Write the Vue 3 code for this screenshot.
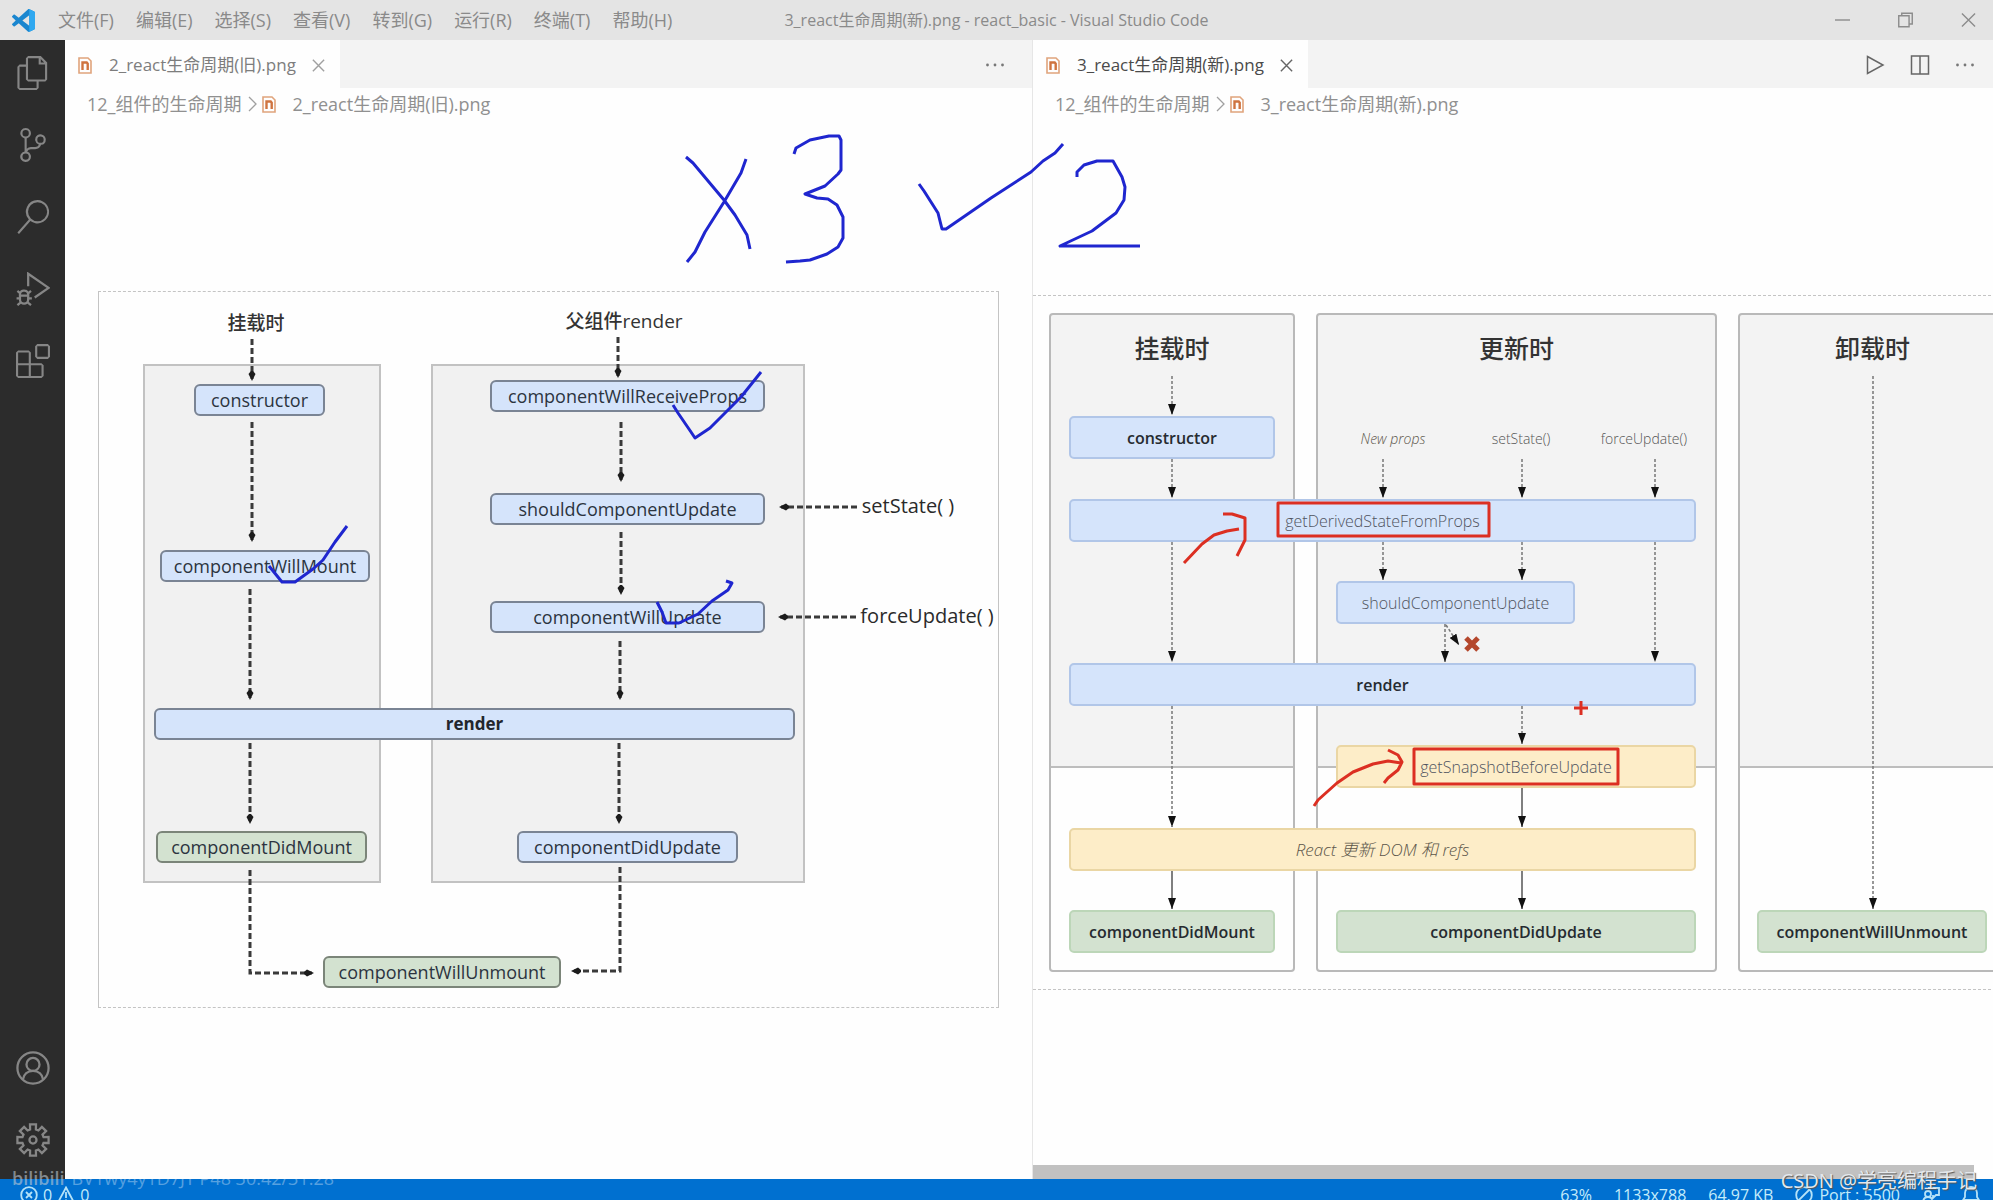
<script setup>
const menus = ['文件(F)', '编辑(E)', '选择(S)', '查看(V)', '转到(G)', '运行(R)', '终端(T)', '帮助(H)']

const activities = [
  { name: '资源管理器', d: 'M17.5 0h-9L7 1.5V6H2.5L1 7.5v15.07L2.5 24h12.07L16 22.57V18h4.7l1.3-1.43V4.5L17.5 0zm0 2.12l2.38 2.38H17.5V2.12zm-3 20.38h-12v-15H7v9.07L8.5 18h6v4.5zm6-6h-12v-15H16V6h4.5v10.5z' },
  { name: '源代码管理', d: 'M21.007 8.222A3.738 3.738 0 0 0 15.045 5.2a3.737 3.737 0 0 0 1.156 6.583 2.988 2.988 0 0 1-2.668 1.67h-2.99a4.456 4.456 0 0 0-2.989 1.165V7.4a3.737 3.737 0 1 0-1.494 0v9.117a3.776 3.776 0 1 0 1.816.099 2.99 2.99 0 0 1 2.668-1.667h2.99a4.484 4.484 0 0 0 4.223-3.039 3.736 3.736 0 0 0 3.25-3.687zM4.565 3.738a2.242 2.242 0 1 1 4.484 0 2.242 2.242 0 0 1-4.484 0zm4.484 16.441a2.242 2.242 0 1 1-4.484 0 2.242 2.242 0 0 1 4.484 0zm8.221-9.715a2.242 2.242 0 1 1 0-4.485 2.242 2.242 0 0 1 0 4.485z' },
  { name: '搜索', d: 'M15.25 0a8.25 8.25 0 0 0-6.18 13.72L1 22.88l1.12 1.12 8.05-9.12A8.251 8.251 0 1 0 15.25.01V0zm0 15a6.75 6.75 0 1 1 0-13.5 6.75 6.75 0 0 1 0 13.5z' },
  { name: '运行和调试', stroke: true, d: 'M8.6 10V1.2L23 11.2 13.2 18M6 13.2a2.6 2.6 0 0 1 2.6 2.6v3.6a2.9 2.9 0 0 1-5.8 0v-3.6A2.6 2.6 0 0 1 6 13.2zM2.8 16.6h5.8M.4 18.6h2.4M8.8 18.6h2.4M1 13.4l2.2 1.8M10.6 13.4l-2.2 1.8M1 23.4l2.2-1.8M10.6 23.4l-2.2-1.8' },
  { name: '扩展', d: 'M13.5 1.5L15 0h7.5L24 1.5V9l-1.5 1.5H15L13.5 9V1.5zm1.5 0V9h7.5V1.5H15zM0 15V6l1.5-1.5H9L10.5 6v7.5H18l1.5 1.5v7.5L18 24H1.5L0 22.5V15zm9-1.5V6H1.5v7.5H9zM9 15H1.5v7.5H9V15zm1.5 7.5H18V15h-7.5v7.5z' },
]

// Eight-tooth gear outline around (12, 12)
const gearPath = (() => {
  const pts = []
  for (let i = 0; i < 8; i++) {
    const a = (i * Math.PI) / 4
    const steps = [[-0.27, 7.7], [-0.19, 11.2], [0.19, 11.2], [0.27, 7.7]]
    for (const [da, r] of steps) {
      pts.push(`${(12 + r * Math.sin(a + da)).toFixed(2)} ${(12 - r * Math.cos(a + da)).toFixed(2)}`)
    }
  }
  return `M${pts.join('L')}Z`
})()

// Nodes: x, y, w, h in canvas pixels
const oldNodes = [
  { t: 'constructor', c: 'blue', x: 96, y: 93, w: 131 },
  { t: 'componentWillMount', c: 'blue', x: 62, y: 259, w: 210 },
  { t: 'componentWillReceiveProps', c: 'blue', x: 392, y: 89, w: 275 },
  { t: 'shouldComponentUpdate', c: 'blue', x: 392, y: 202, w: 275 },
  { t: 'componentWillUpdate', c: 'blue', x: 392, y: 310, w: 275 },
  { t: 'render', c: 'blue strong', x: 56, y: 417, w: 641 },
  { t: 'componentDidMount', c: 'green', x: 58, y: 540, w: 211 },
  { t: 'componentDidUpdate', c: 'blue', x: 419, y: 540, w: 221 },
  { t: 'componentWillUnmount', c: 'green', x: 225, y: 665, w: 238 },
]
const oldPanels = [
  { x: 45, y: 73, w: 238, h: 519 },
  { x: 333, y: 73, w: 374, h: 519 },
]
const oldLabels = [
  { t: '挂载时', x: 158, y: 32, c: 'heading' },
  { t: '父组件render', x: 526, y: 30, c: 'heading' },
  { t: 'setState( )', x: 810, y: 215, c: 'call' },
  { t: 'forceUpdate( )', x: 829, y: 325, c: 'call' },
]
const oldArrows = [
  'M154 48V88', 'M154 131V249', 'M152 298V407', 'M152 452V531', 'M152 579V682H214',
  'M520 46V85', 'M523 131V189', 'M523 241V302', 'M522 350V407', 'M521 452V531', 'M522 576V680H475',
  'M759 216H683', 'M758 326H682',
]
const oldTicks = [
  'M171 275L184 291H197L215 278L225 269L237 251L249 235',
  'M575 114L580 122L593 141L597 147L612 137L621 128L643 106L663 81',
  'M559 311L564 321L568 332H581L600 323L614 310L630 299L634 292L628 290',
]

const newPanels = [
  { t: '挂载时', x: 16, w: 246 },
  { t: '更新时', x: 283, w: 401 },
  { t: '卸载时', x: 705, w: 269 },
]
const newNodes = [
  { t: 'constructor', c: 'sky strong', x: 36, y: 121, w: 206 },
  { t: 'getDerivedStateFromProps', c: 'sky light', x: 36, y: 204, w: 627 },
  { t: 'shouldComponentUpdate', c: 'sky light', x: 303, y: 286, w: 239 },
  { t: 'render', c: 'sky strong', x: 36, y: 368, w: 627 },
  { t: 'getSnapshotBeforeUpdate', c: 'sand light', x: 303, y: 450, w: 360 },
  { t: 'React 更新 DOM 和 refs', c: 'sand slanted', x: 36, y: 533, w: 627 },
  { t: 'componentDidMount', c: 'mint strong', x: 36, y: 615, w: 206 },
  { t: 'componentDidUpdate', c: 'mint strong', x: 303, y: 615, w: 360 },
  { t: 'componentWillUnmount', c: 'mint strong', x: 724, y: 615, w: 230 },
]
const newLabels = [
  { t: 'New props', x: 360, y: 144, c: 'source slanted' },
  { t: 'setState()', x: 488, y: 144, c: 'source' },
  { t: 'forceUpdate()', x: 611, y: 144, c: 'source' },
]
const dotted = [
  [139, 81, 120], [139, 164, 203], [139, 247, 367], [139, 411, 532],
  [350, 164, 203], [350, 247, 285],
  [489, 164, 203], [489, 247, 285], [489, 411, 449],
  [622, 164, 203], [622, 247, 367], [412, 329, 367], [840, 81, 614],
]
const solid = [[139, 576, 614], [489, 493, 532], [489, 576, 614]]

const panes = [
  { id: 'old', file: '2_react生命周期(旧).png', active: false },
  { id: 'new', file: '3_react生命周期(新).png', active: true },
]
const box = (n, h) => ({ left: n.x + 'px', top: n.y + 'px', width: n.w + 'px', height: h + 'px' })
const at = (n) => ({ left: n.x + 'px', top: n.y + 'px' })
</script>

<template>
  <div class="window">
    <header class="titlebar">
      <div class="menubar">
        <svg class="logo" viewBox="0 0 100 100" aria-hidden="true">
          <path fill="#1a86cf" fill-rule="evenodd" d="M96.5 10.7 75.9.8c-2.4-1.1-5.2-.7-7.1 1.2L29.4 38 12.2 25c-1.6-1.2-3.8-1.1-5.3.2l-5.5 5c-1.8 1.7-1.8 4.5 0 6.2L16.2 50 1.4 63.6c-1.8 1.7-1.8 4.5 0 6.2l5.5 5c1.5 1.4 3.7 1.5 5.3.2L29.4 62l39.4 36c1.9 1.9 4.7 2.3 7.1 1.2l20.6-9.9c2.2-1 3.5-3.2 3.5-5.6V16.3c0-2.4-1.4-4.6-3.5-5.6zM75 72.7 45.1 50 75 27.3z" />
          <path fill="#2fa8f0" d="M75.9.8 96.5 10.7c2.1 1 3.5 3.2 3.5 5.6v67.4c0 2.4-1.3 4.6-3.5 5.6l-20.6 9.9c-1.5.7-3 .6-4.4 0 2-.6 3.5-2 3.5-4.4V5.2c0-2.2-1.5-3.8-3.5-4.4 1.4-.6 2.9-.7 4.4 0z" />
        </svg>
        <nav class="menus">
          <button v-for="m in menus" :key="m" type="button">{{ m }}</button>
        </nav>
      </div>
      <div class="title">3_react生命周期(新).png - react_basic - Visual Studio Code</div>
      <div class="controls">
        <button type="button" aria-label="最小化"><svg viewBox="0 0 16 16"><path d="M0 8h16" /></svg></button>
        <button type="button" aria-label="还原"><svg viewBox="0 0 16 16"><path d="M.8 3.5h11v11.7h-11zM4 3.5V.8h11.2v11.5H12" /></svg></button>
        <button type="button" aria-label="关闭"><svg viewBox="0 0 16 16"><path d="M1 1l14 14M15 1 1 15" /></svg></button>
      </div>
    </header>

    <div class="workbench">
      <aside class="activity">
        <div class="group">
          <button v-for="a in activities" :key="a.name" type="button" :aria-label="a.name">
            <svg viewBox="0 0 24 24" :class="{ stroked: a.stroke }"><path :d="a.d" fill-rule="evenodd" /></svg>
          </button>
        </div>
        <div class="group">
          <button type="button" aria-label="帐户">
            <svg class="stroked" viewBox="0 0 24 24"><circle cx="12" cy="12" r="11" /><circle cx="12" cy="9.5" r="4.6" /><path d="M4.9 20c.6-3.6 3.3-6 7.1-6s6.5 2.4 7.1 6" /></svg>
          </button>
          <button type="button" aria-label="管理">
            <svg class="stroked" viewBox="0 0 24 24"><path :d="gearPath" /><circle cx="12" cy="12" r="2.5" /></svg>
          </button>
        </div>
      </aside>

      <main class="editors">
        <section v-for="p in panes" :key="p.id" class="pane" :class="p.id">
          <div class="tabs">
            <div class="tab" :class="{ active: p.active }">
              <svg class="file" viewBox="0 0 14 17"><path class="page" d="M1 1h9l3 3v12H1z" /><path class="mark" d="M4.5 13V5.5h4.2l1 1.2V13" /></svg>
              <span>{{ p.file }}</span>
              <button type="button" aria-label="关闭标签"><svg viewBox="0 0 12 12"><path d="M.8.8l10.4 10.4M11.2.8.8 11.2" /></svg></button>
            </div>
            <div class="actions">
              <template v-if="p.active">
                <button type="button" aria-label="运行"><svg viewBox="0 0 20 20"><path d="M2.5 1.5 18 10 2.5 18.5z" /></svg></button>
                <button type="button" aria-label="拆分编辑器"><svg viewBox="0 0 20 20"><path d="M1.5 1h17v18h-17zM10 1v18" /></svg></button>
              </template>
              <button type="button" aria-label="更多操作"><svg class="dots" viewBox="0 0 20 20"><circle cx="2.5" cy="10" r="1.4" /><circle cx="10" cy="10" r="1.4" /><circle cx="17.5" cy="10" r="1.4" /></svg></button>
            </div>
          </div>
          <div class="crumbs">
            <span>12_组件的生命周期</span>
            <svg class="chevron" viewBox="0 0 10 16"><path d="M1 1l7 7-7 7" /></svg>
            <svg class="file" viewBox="0 0 14 17"><path class="page" d="M1 1h9l3 3v12H1z" /><path class="mark" d="M4.5 13V5.5h4.2l1 1.2V13" /></svg>
            <span class="name">{{ p.file }}</span>
          </div>

          <div v-if="p.id === 'old'" class="viewer">
            <div class="canvas canvas-old">
              <div class="frame"></div>
              <div v-for="(b, i) in oldPanels" :key="i" class="panel" :style="box(b, b.h)"></div>
              <div v-for="n in oldNodes" :key="n.t" class="node" :class="n.c" :style="box(n, 32)">{{ n.t }}</div>
              <div v-for="l in oldLabels" :key="l.t" class="label" :class="l.c" :style="at(l)">{{ l.t }}</div>
              <svg class="lines" aria-hidden="true">
                <defs>
                  <marker id="dart" viewBox="0 0 10 8" refX="8" refY="4" markerWidth="10" markerHeight="8" markerUnits="userSpaceOnUse" orient="auto">
                    <path d="M0 3 3 .5 10 4 3 7.5 0 5z" fill="#1c1c1c" />
                  </marker>
                </defs>
                <path v-for="d in oldArrows" :key="d" class="dash" :d="d" marker-end="url(#dart)" />
                <path v-for="d in oldTicks" :key="d" class="ink" :d="d" />
              </svg>
            </div>
          </div>

          <div v-else class="viewer wide">
            <div class="scroller">
              <div class="canvas canvas-new">
                <div class="frame"></div>
                <div v-for="b in newPanels" :key="b.t" class="phase" :style="box({ ...b, y: 18 }, 659)"><h2>{{ b.t }}</h2></div>
                <div v-for="n in newNodes" :key="n.t" class="node" :class="n.c" :style="box(n, 43)">{{ n.t }}</div>
                <div v-for="l in newLabels" :key="l.t" class="label" :class="l.c" :style="at(l)">{{ l.t }}</div>
                <svg class="lines" aria-hidden="true">
                  <defs>
                    <marker id="head" viewBox="0 0 11 8" refX="11" refY="4" markerWidth="11" markerHeight="8" markerUnits="userSpaceOnUse" orient="auto">
                      <path d="M0 0 11 4 0 8z" fill="#111" />
                    </marker>
                  </defs>
                  <path v-for="(a, i) in dotted" :key="'d' + i" class="dot" :d="`M${a[0]} ${a[1]}V${a[2]}`" marker-end="url(#head)" />
                  <path v-for="(a, i) in solid" :key="'s' + i" class="full" :d="`M${a[0]} ${a[1]}V${a[2]}`" marker-end="url(#head)" />
                  <path class="dot" d="M413 330l13 20" marker-end="url(#head)" />
                  <path class="cross" d="M433 343l12 12M445 343l-12 12" />
                  <path class="red" d="M245 208h211v33H245zM381 454h204v35H381z" />
                  <path class="red" d="M151 268L169 249L181 240L194 236L206 234M190 219H199L212 223V245L204 261" />
                  <path class="red" d="M281 511L285 505L304 488L320 477L340 469L355 466L368 468M355 455L365 460L369 467L365 475L355 483L351 488" />
                  <path class="red" d="M541 413h14M548 406v14" />
                </svg>
              </div>
            </div>
            <div class="scrollbar"><div class="thumb"></div></div>
          </div>
        </section>

        <svg class="scribble" aria-hidden="true">
          <path class="ink" d="M621 117L628 123L659 160L670 175L682 195L685 209M681 119L676 133L659 162L640 192L630 212L622 222" />
          <path class="ink" d="M729 114L731 108L745 100L764 96H774L776 100V130L773 134L760 146L740 154L752 158L763 159L772 165L778 177V198L773 207L762 214L745 220L735 221L721 222" />
          <path class="ink" d="M854 144L859 151L873 173L877 189H881L926 158L966 132L978 121L990 113L998 104" />
          <path class="ink" d="M1012 137V132L1019 125L1032 121H1048L1057 137L1060 147L1059 160L1051 173L1027 191L995 206H1075" />
        </svg>
      </main>
    </div>

    <footer class="status">
      <div class="side">
        <svg viewBox="0 0 18 18"><circle cx="9" cy="9" r="7.8" /><path d="M6 6l6 6M12 6l-6 6" /></svg><span>0</span>
        <svg viewBox="0 0 18 18"><path d="M9 1.5 17 16.5H1zM9 6v6M9 13.5v1.5" /></svg><span>0</span>
      </div>
      <div class="side info">
        <span>63%</span>
        <span>1133x788</span>
        <span>64.97 KB</span>
        <span class="port"><svg viewBox="0 0 18 18"><circle cx="9" cy="9" r="7.8" /><path d="M3.5 14.5l11-11" /></svg>Port : 5500</span>
        <svg viewBox="0 0 18 18"><circle cx="6" cy="8" r="3" /><path d="M1 17c0-4 2-6 5-6s5 2 5 6M6 2h11v7h-3l-3 3V9" /></svg>
        <svg viewBox="0 0 18 18"><path d="M1 14h16l-2-3V7a6 6 0 0 0-12 0v4zM7 14.5a2 2 0 0 0 4 0" /></svg>
      </div>
    </footer>

    <div class="mark-left"><b>bilibili</b><span>BV1wy4y1D7JT P48 30:42/31:28</span></div>
    <div class="mark-right">CSDN @学亮编程手记</div>
  </div>
</template>

<style>
body {
  margin: 0;
  overflow: hidden;
}
</style>

<style scoped>
.window {
  position: relative;
  display: flex;
  flex-direction: column;
  height: 100vh;
  overflow: hidden;
  background: #fefefe;
  color: #333;
  font: 18px/24px "Open Sans", "Noto Sans CJK SC", sans-serif;
}
button {
  padding: 0;
  border: 0;
  background: none;
  color: inherit;
  font: inherit;
}
svg {
  display: block;
  flex: none;
  fill: none;
}

/* Title bar */
.titlebar {
  display: grid;
  grid-template-columns: 1fr auto 1fr;
  align-items: center;
  flex: none;
  height: 40px;
  background: #e4e4e4;
  color: #8a8a8a;
}
.menubar,
.menus {
  display: flex;
  align-items: center;
}
.menubar {
  gap: 23px;
  padding-left: 12px;
}
.menus {
  gap: 22px;
  white-space: nowrap;
}
.logo {
  width: 23px;
  height: 23px;
}
.title {
  font-size: 16px;
  white-space: nowrap;
}
.controls {
  display: flex;
  justify-content: flex-end;
  gap: 48px;
  padding-right: 17px;
}
.controls svg {
  width: 15px;
  height: 16px;
  stroke: #8c8c8c;
  stroke-width: 1.5;
}

/* Activity bar */
.workbench {
  display: flex;
  flex: 1;
  min-height: 0;
}
.activity {
  display: flex;
  flex: none;
  flex-direction: column;
  justify-content: space-between;
  width: 65px;
  padding-bottom: 6px;
  box-sizing: border-box;
  background: #2c2c2c;
}
.group {
  display: flex;
  flex-direction: column;
  gap: 6px;
}
.group button {
  display: grid;
  place-items: center;
  height: 66px;
}
.group svg {
  width: 34px;
  height: 34px;
  fill: #868686;
}
.group svg.stroked {
  fill: none;
  stroke: #868686;
  stroke-width: 1.6;
}

/* Editor panes */
.editors {
  position: relative;
  display: flex;
  flex: 1;
  min-width: 0;
}
.pane {
  display: flex;
  flex-direction: column;
  min-width: 0;
  box-sizing: border-box;
}
.pane.old {
  flex: 1 1 967px;
}
.pane.new {
  flex: 1 1 961px;
  border-left: 1px solid #e6e6e6;
}
.tabs {
  display: flex;
  justify-content: space-between;
  flex: none;
  height: 48px;
  background: #f3f3f3;
}
.tab {
  display: flex;
  align-items: center;
  box-sizing: border-box;
  min-width: 275px;
  padding: 2px 15px 0 13px;
  background: #fefefe;
  color: #7d7d7d;
  font-size: 17px;
}
.tab.active {
  color: #4a4a4a;
}
.tab span {
  margin-left: 17px;
  white-space: nowrap;
}
.tab button {
  margin-left: auto;
}
.tab button svg {
  width: 13px;
  height: 13px;
  stroke: #a0a0a0;
  stroke-width: 1.3;
}
.tab.active button svg {
  stroke: #666;
}
.file {
  width: 14px;
  height: 17px;
}
.page {
  stroke: #e0a47c;
  stroke-width: 1.6;
}
.mark {
  stroke: #cf7440;
  stroke-width: 2.4;
}
.actions {
  display: flex;
  align-items: center;
  gap: 25px;
  padding: 2px 18px 0 0;
}
.pane.old .actions {
  padding-right: 27px;
}
.actions svg {
  width: 20px;
  height: 20px;
  stroke: #666;
  stroke-width: 1.5;
}
.actions .dots {
  fill: #777;
  stroke: none;
}
.crumbs {
  display: flex;
  align-items: center;
  flex: none;
  height: 32px;
  padding-left: 22px;
  color: #909090;
  white-space: nowrap;
}
.chevron {
  width: 10px;
  height: 16px;
  margin: 0 4px 0 7px;
  stroke: #a0a0a0;
  stroke-width: 1.3;
}
.crumbs .name {
  margin-left: 16px;
}

/* Image preview */
.viewer {
  display: flex;
  align-items: center;
  justify-content: center;
  flex: 1;
  min-height: 0;
}
.viewer.wide {
  flex-direction: column;
  align-items: stretch;
}
.scroller {
  display: flex;
  align-items: center;
  flex: 1;
  min-height: 0;
  overflow: hidden;
}
.scrollbar {
  flex: none;
  height: 14px;
}
.thumb {
  width: 98%;
  height: 14px;
  background: #c1c1c1;
}
.canvas {
  position: relative;
  flex: none;
}
.canvas-old {
  width: 901px;
  height: 717px;
}
.canvas-new {
  width: 998px;
  height: 695px;
}
.frame,
.panel,
.phase,
.node,
.label,
.lines,
.scribble {
  position: absolute;
}
.frame {
  inset: 0;
  border: 1px solid #c4c4c4;
  border-top-style: dashed;
  border-bottom-style: dashed;
}
.canvas-new .frame {
  border-left: 0;
}
.panel {
  box-sizing: border-box;
  border: 2px solid #c2c2c2;
  background: #f1f1f1;
}
.node {
  display: flex;
  align-items: center;
  justify-content: center;
  box-sizing: border-box;
  border-style: solid;
  white-space: nowrap;
}
.canvas-old .node {
  border-width: 2px;
  border-radius: 6px;
  color: #2c3440;
}
.canvas-old .blue {
  border-color: #7a8494;
  background: #d5e4fb;
}
.canvas-old .green {
  border-color: #7b8579;
  background: #d3e2d0;
}
.canvas-old .strong {
  color: #22262c;
  font-size: 17px;
  font-weight: 700;
}
.label {
  transform: translate(-50%, -50%);
  white-space: nowrap;
}
.heading {
  color: #333;
  font-size: 19px;
  font-weight: 500;
}
.call {
  color: #2a2a2a;
  font-size: 20px;
}
.phase {
  box-sizing: border-box;
  border: 2px solid #b9b9b9;
  border-radius: 4px;
  background: linear-gradient(#f3f3f3 451px, #bdbdbd 451px, #bdbdbd 453px, #fefefe 453px);
}
.phase h2 {
  margin: 15px 0 0;
  color: #333;
  font-size: 25px;
  font-weight: 500;
  line-height: 36px;
  text-align: center;
}
.canvas-new .node {
  border-width: 2px;
  border-radius: 5px;
  font-size: 16px;
}
.canvas-new .sky {
  border-color: #b1c6e8;
  background: #d5e4fb;
}
.canvas-new .sand {
  border-color: #ead6a4;
  background: #fdedc8;
}
.canvas-new .mint {
  border-color: #bcd6b8;
  background: #d3e2d0;
}
.canvas-new .strong {
  color: #262b30;
  font-weight: 600;
}
.canvas-new .light {
  color: #505460;
  font-weight: 300;
}
.canvas-new .slanted {
  color: #5c564a;
  font-style: italic;
  font-weight: 300;
}
.canvas-new .node.slanted {
  font-size: 17px;
}
.source {
  color: #555;
  font-size: 14px;
  font-weight: 300;
}
.lines,
.scribble {
  top: 0;
  left: 0;
  width: 100%;
  height: 100%;
  overflow: visible;
  pointer-events: none;
}
.dash {
  stroke: #3a3a3a;
  stroke-width: 3;
  stroke-dasharray: 6 3;
}
.dot {
  stroke: #777;
  stroke-width: 1.5;
  stroke-dasharray: 3 2;
}
.full {
  stroke: #555;
  stroke-width: 1.5;
}
.ink {
  stroke: #1f26cf;
  stroke-width: 3;
  stroke-linejoin: round;
}
.red {
  stroke: #dc2f22;
  stroke-width: 3;
  stroke-linejoin: round;
}
.cross {
  stroke: #b4472c;
  stroke-width: 5;
}

/* Status bar */
.status {
  display: flex;
  align-items: flex-start;
  justify-content: space-between;
  flex: none;
  height: 21px;
  padding: 0 13px 0 20px;
  overflow: hidden;
  background: #0070d0;
  color: #c4ecfa;
  font-size: 16px;
  line-height: 32px;
  white-space: nowrap;
}
.side {
  display: flex;
  align-items: center;
  gap: 5px;
  height: 32px;
}
.side svg {
  width: 18px;
  height: 18px;
  stroke: #b4e2f8;
  stroke-width: 1.8;
}
.info {
  gap: 22px;
}
.port {
  display: flex;
  align-items: center;
  gap: 6px;
}

/* Watermarks */
.mark-left,
.mark-right {
  position: absolute;
  white-space: nowrap;
}
.mark-left {
  bottom: 10px;
  left: 12px;
  display: flex;
  align-items: center;
  gap: 7px;
  color: rgba(190, 200, 210, 0.6);
}
.mark-left b {
  font-weight: 600;
}
.mark-left span {
  color: rgba(255, 255, 255, 0.35);
}
.mark-right {
  right: 16px;
  bottom: 7px;
  color: #e4e8ec;
  font-size: 20px;
  text-shadow: 1px 1px 1px #555;
}
</style>
